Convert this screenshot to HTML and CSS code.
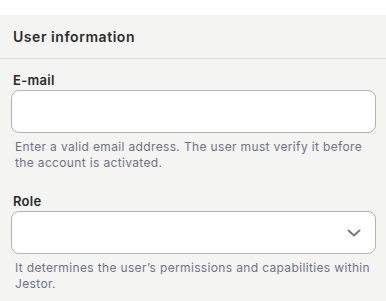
FILE: index.html
```html
<!DOCTYPE html>
<html lang="en">
<head>
    <meta charset="UTF-8">
    <meta name="viewport" content="width=device-width, initial-scale=1.0">
    <title>User information</title>
    <link rel="stylesheet" href="styles.css">
</head>
<body>
    <div class="top-strip"></div>
    <div class="panel">
        <div class="panel-header">User information</div>

        <div class="panel-body">
            <div class="field">
                <label class="field-label" for="email">E-mail</label>
                <input class="field-input" id="email" type="email">
                <div class="field-help">Enter a valid email address. The user must verify it before the account is activated.</div>
            </div>

            <div class="field">
                <label class="field-label" for="role">Role</label>
                <div class="select-box" id="role">
                    <svg class="chevron" width="14" height="8" viewBox="0 0 14 8">
                        <path d="M1.5 1.5 L7 6.5 L12.5 1.5" fill="none" stroke="#7a7a7a" stroke-width="2" stroke-linecap="round" stroke-linejoin="round"/>
                    </svg>
                </div>
                <div class="field-help">It determines the user’s permissions and capabilities within Jestor.</div>
            </div>
        </div>
    </div>
</body>
</html>
```

FILE: styles.css
```css
body {
    margin: 0;
    padding: 0;
    font-family: Inter, "Noto Sans", sans-serif;
    background-color: #f4f4f2;
    height: 301px;
    overflow: hidden;
}

.top-strip {
    height: 15px;
    background-color: #ffffff;
}

.panel {
    background-color: #f4f4f2;
}

.panel-header {
    padding: 12px 13px 12px 13px;
    font-size: 14px;
    line-height: 19px;
    font-weight: 600;
    color: #2d2d2d;
    letter-spacing: 0.55px;
    border-bottom: 1px solid #dcdcda;
}

.panel-body {
    padding: 13px 10px 0 11px;
}

.field {
    display: flex;
    flex-direction: column;
    margin-bottom: 22px;
}

.field-label {
    font-size: 13px;
    line-height: 16px;
    font-weight: 600;
    color: #2a2a2a;
    padding-left: 2px;
    margin-bottom: 2px;
    letter-spacing: 0.3px;
}

.field-input,
.select-box {
    box-sizing: border-box;
    height: 43px;
    border: 1px solid #b3b3b3;
    border-radius: 8px;
    background-color: #ffffff;
    outline: none;
    margin: 0;
}

.select-box {
    display: flex;
    align-items: center;
    justify-content: flex-end;
    padding-right: 14px;
}

.field-help {
    margin-top: 6px;
    padding: 0 2px 0 4px;
    font-size: 12px;
    line-height: 16px;
    color: #6f7389;
    letter-spacing: 0.35px;
}
```
